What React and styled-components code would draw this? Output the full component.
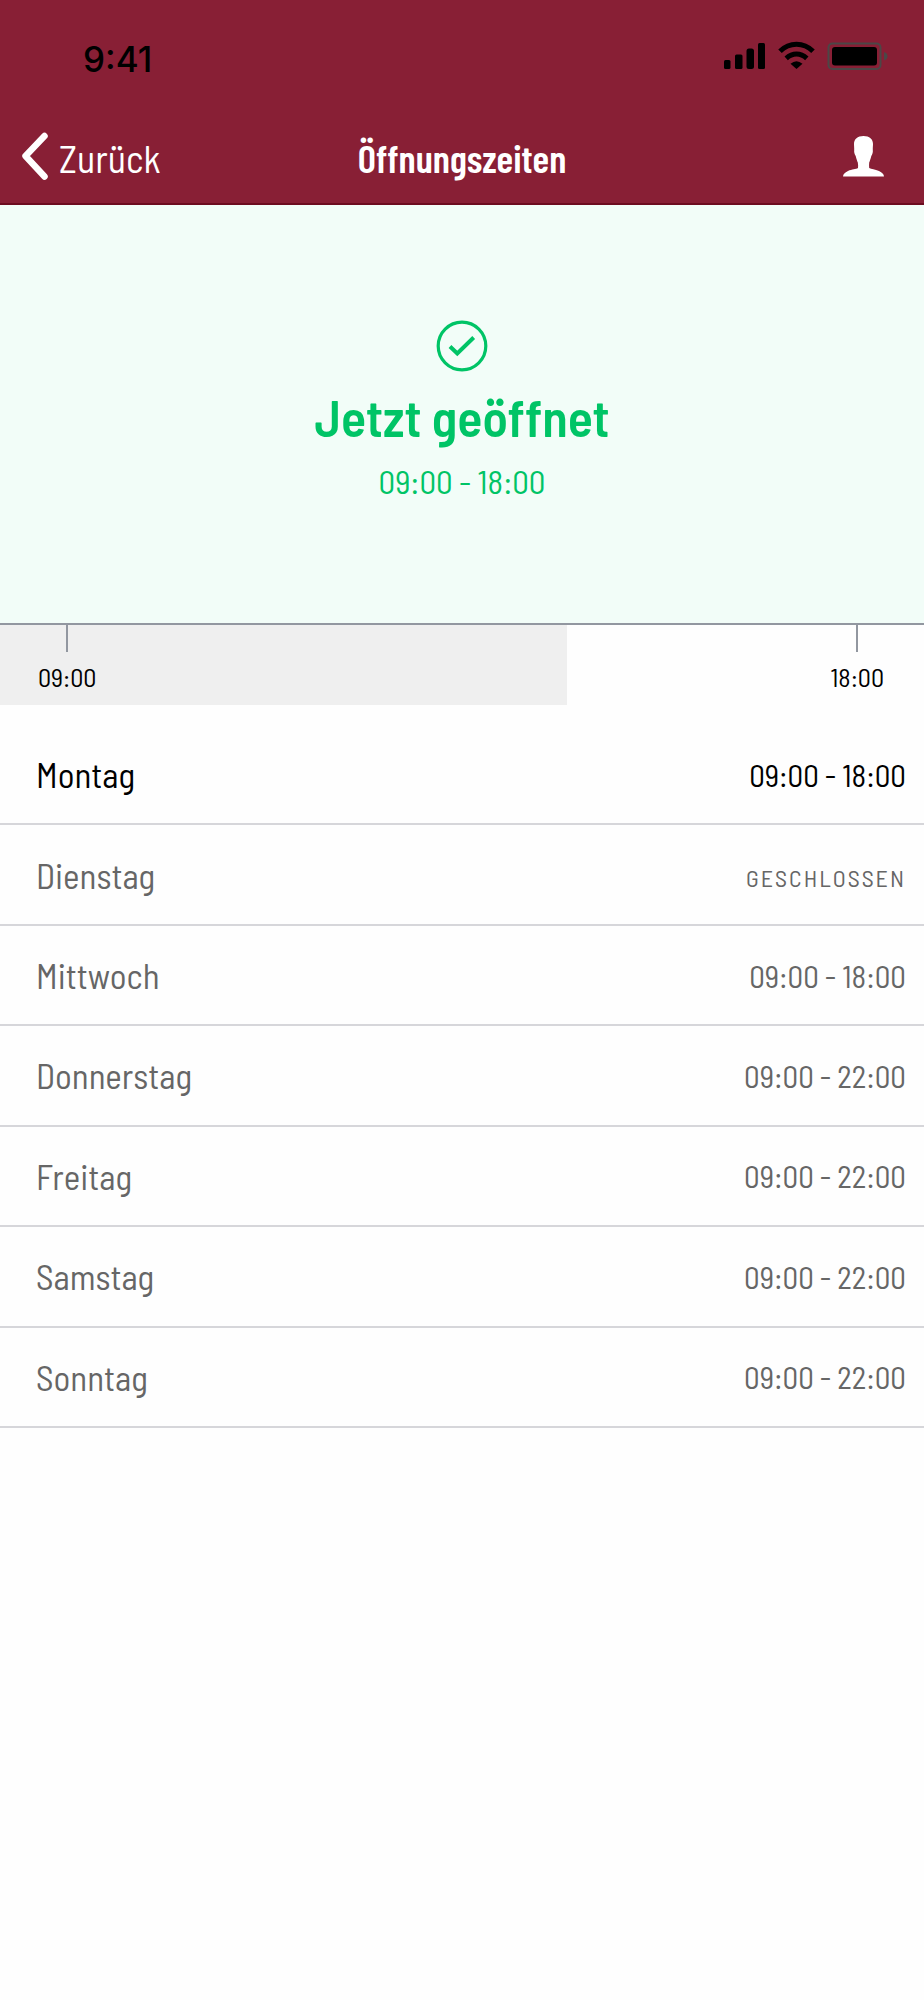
import React from "react";
import styled, { createGlobalStyle } from "styled-components";

const days = [
  { name: "Montag", hours: "09:00 - 18:00", today: true },
  { name: "Dienstag", hours: null },
  { name: "Mittwoch", hours: "09:00 - 18:00" },
  { name: "Donnerstag", hours: "09:00 - 22:00" },
  { name: "Freitag", hours: "09:00 - 22:00" },
  { name: "Samstag", hours: "09:00 - 22:00" },
  { name: "Sonntag", hours: "09:00 - 22:00" },
];

// share of the timeline that has already passed
const elapsed = 61.4;

function StatusIcons() {
  return (
    <StStatusIcons width="166" height="30" viewBox="0 0 166 30" aria-hidden="true">
      <rect x="1" y="20" width="6.5" height="9" rx="1.5" />
      <rect x="12" y="14.5" width="7.5" height="14.5" rx="1.5" />
      <rect x="23.5" y="8.5" width="7.5" height="20.5" rx="2.5" />
      <rect x="35" y="3" width="7" height="26" rx="1.5" />
      <path
        d="M57 11.2C66.5 1.8 80.5 1.8 90 11.2M63.2 18.3C69.5 12.5 77.5 12.5 83.8 18.3"
        fill="none"
        stroke="#000"
        strokeWidth="5"
      />
      <path d="M67.5 23.8Q73.5 18.5 79.5 23.8L73.5 29Z" />
      <rect x="105.5" y="3.5" width="52" height="25.5" rx="4" fill="none" stroke="#4b4747" strokeWidth="2" />
      <rect x="109" y="7" width="45" height="18.5" rx="3" />
      <path d="M161 12Q164.5 13 164.5 16.3Q164.5 19.5 161 20.5Z" fill="#4b4747" />
    </StStatusIcons>
  );
}

function App() {
  return (
    <StPage>
      <GlobalStyle />
      <StHeader>
        <StStatusBar>
          <StClock>9:41</StClock>
          <StatusIcons />
        </StStatusBar>
        <StNav>
          <StBackBtn type="button">
            <svg width="28" height="48" viewBox="0 0 28 48" aria-hidden="true">
              <path
                d="M23.5 4L4.5 24L23.5 44.5"
                fill="none"
                stroke="currentColor"
                strokeWidth="6.5"
                strokeLinecap="round"
                strokeLinejoin="round"
              />
            </svg>
            <StBackLabel>Zurück</StBackLabel>
          </StBackBtn>
          <StTitle>Öffnungszeiten</StTitle>
          <StProfileBtn type="button" aria-label="Profil">
            <svg width="41" height="41" viewBox="0 0 41 41" aria-hidden="true">
              <path
                fill="currentColor"
                d="M20.5 0C26.5 0 30 3 30 8C30 9.5 29.7 11.5 29.8 14C30.1 16.5 29.3 18.3 28.3 20C27.6 22.7 27 24.8 26.2 26.5C26 28.5 26 30.3 26.2 32C28.2 33.4 32 33 36 35C39.2 36.5 40.8 38 41 40.5H0C0.2 38 1.8 36.5 5 35C9 33 13 33.4 15 32C15.2 30.3 15.2 28.5 14.8 26.5C14 24.8 13.4 22.7 12.7 20C11.7 18.3 10.9 16.5 11.2 14C11.3 11.5 11 9.5 11 8C11 3 14.5 0 20.5 0Z"
              />
            </svg>
          </StProfileBtn>
        </StNav>
      </StHeader>

      <StStatus>
        <svg width="52" height="52" viewBox="0 0 52 52" fill="none" stroke="#00c466" aria-hidden="true">
          <circle cx="26" cy="26" r="23.8" strokeWidth="3.2" />
          <path d="M14 26.5L21.3 33.5L37.7 17.5" strokeWidth="4" />
        </svg>
        <StStatusTitle>Jetzt geöffnet</StStatusTitle>
        <StStatusHours>09:00 - 18:00</StStatusHours>
      </StStatus>

      <StTimeline $elapsed={elapsed}>
        <StMarker>09:00</StMarker>
        <StMarker>18:00</StMarker>
      </StTimeline>

      <StTable>
        <tbody>
          {days.map((day) => (
            <StDay key={day.name} $today={day.today}>
              <StDayName scope="row">{day.name}</StDayName>
              <StHours>{day.hours || <StClosed>GESCHLOSSEN</StClosed>}</StHours>
            </StDay>
          ))}
        </tbody>
      </StTable>
    </StPage>
  );
}

export default App;

const GlobalStyle = createGlobalStyle`
  * {
    box-sizing: border-box;
  }
  body {
    margin: 0;
    background-color: #fefefe;
    font-family: "Barlow Semi Condensed", "Roboto Condensed", "Liberation Sans", sans-serif;
  }
  svg {
    display: block;
    flex-shrink: 0;
  }
`;

const StPage = styled.main`
  width: 100%;
  color: #000;
`;

const StHeader = styled.header`
  background-color: #881f35;
  border-bottom: 2px solid #6c0c20;
`;

const StStatusBar = styled.div`
  display: flex;
  justify-content: space-between;
  align-items: flex-start;
  height: 115px;
  padding: 40px 35px 0 83px;
`;

const StClock = styled.span`
  font-family: Inter, "Liberation Sans", sans-serif;
  font-size: 35px;
  font-weight: 500;
  line-height: 38px;
`;

const StStatusIcons = styled.svg`
  fill: #000;
`;

const StNav = styled.nav`
  display: grid;
  grid-template-columns: 1fr auto 1fr;
  align-items: center;
  height: 88px;
  padding: 0 21px 6px;
  color: #fff;
`;

const StBackBtn = styled.button`
  display: flex;
  align-items: center;
  gap: 10px;
  justify-self: start;
  padding: 0;
  border: none;
  background: none;
  color: inherit;
  font-family: inherit;
  font-size: 38px;
  line-height: 48px;
  cursor: pointer;
`;

const StBackLabel = styled.span`
  padding-top: 4px;
`;

const StTitle = styled.h1`
  margin: 0;
  padding-top: 4px;
  font-family: "Barlow Condensed", "Roboto Condensed", "Liberation Sans", sans-serif;
  font-size: 39px;
  font-weight: 600;
  line-height: 48px;
`;

const StProfileBtn = styled.button`
  justify-self: end;
  margin-right: 19px;
  padding: 0;
  border: none;
  background: none;
  color: inherit;
  cursor: pointer;
`;

const StStatus = styled.section`
  display: flex;
  flex-direction: column;
  align-items: center;
  padding: 115px 0 121px;
  border-bottom: 2px solid #9297a0;
  background-color: #f2fdf8;
  color: #00c466;
`;

const StStatusTitle = styled.h2`
  margin: 8px 0;
  font-size: 52px;
  font-weight: 600;
  line-height: 72px;
`;

const StStatusHours = styled.p`
  margin: 0;
  font-size: 33px;
  line-height: 42px;
`;

const StTimeline = styled.div`
  display: flex;
  justify-content: space-between;
  height: 80px;
  padding: 0 40px 0 38px;
  background: linear-gradient(
    to right,
    #efefef ${(props) => props.$elapsed}%,
    transparent ${(props) => props.$elapsed}%
  );
`;

const StMarker = styled.span`
  display: flex;
  flex-direction: column;
  align-items: center;
  gap: 10px;
  font-size: 26px;
  line-height: 30px;
  &::before {
    content: "";
    width: 2px;
    height: 27px;
    background-color: #9297a0;
  }
`;

const StTable = styled.table`
  width: 100%;
  height: 703px;
  margin-top: 20px;
  border-spacing: 0;
`;

const StDay = styled.tr`
  color: ${(props) => (props.$today ? "#000" : "#666")};
  th,
  td {
    padding: 0 18px 0 36px;
    border-bottom: 2px solid #d6d6da;
  }
`;

const StDayName = styled.th`
  font-size: 35px;
  font-weight: 400;
  text-align: left;
`;

const StHours = styled.td`
  font-size: 31px;
  text-align: right;
`;

const StClosed = styled.span`
  font-size: 24px;
  letter-spacing: 2px;
`;
